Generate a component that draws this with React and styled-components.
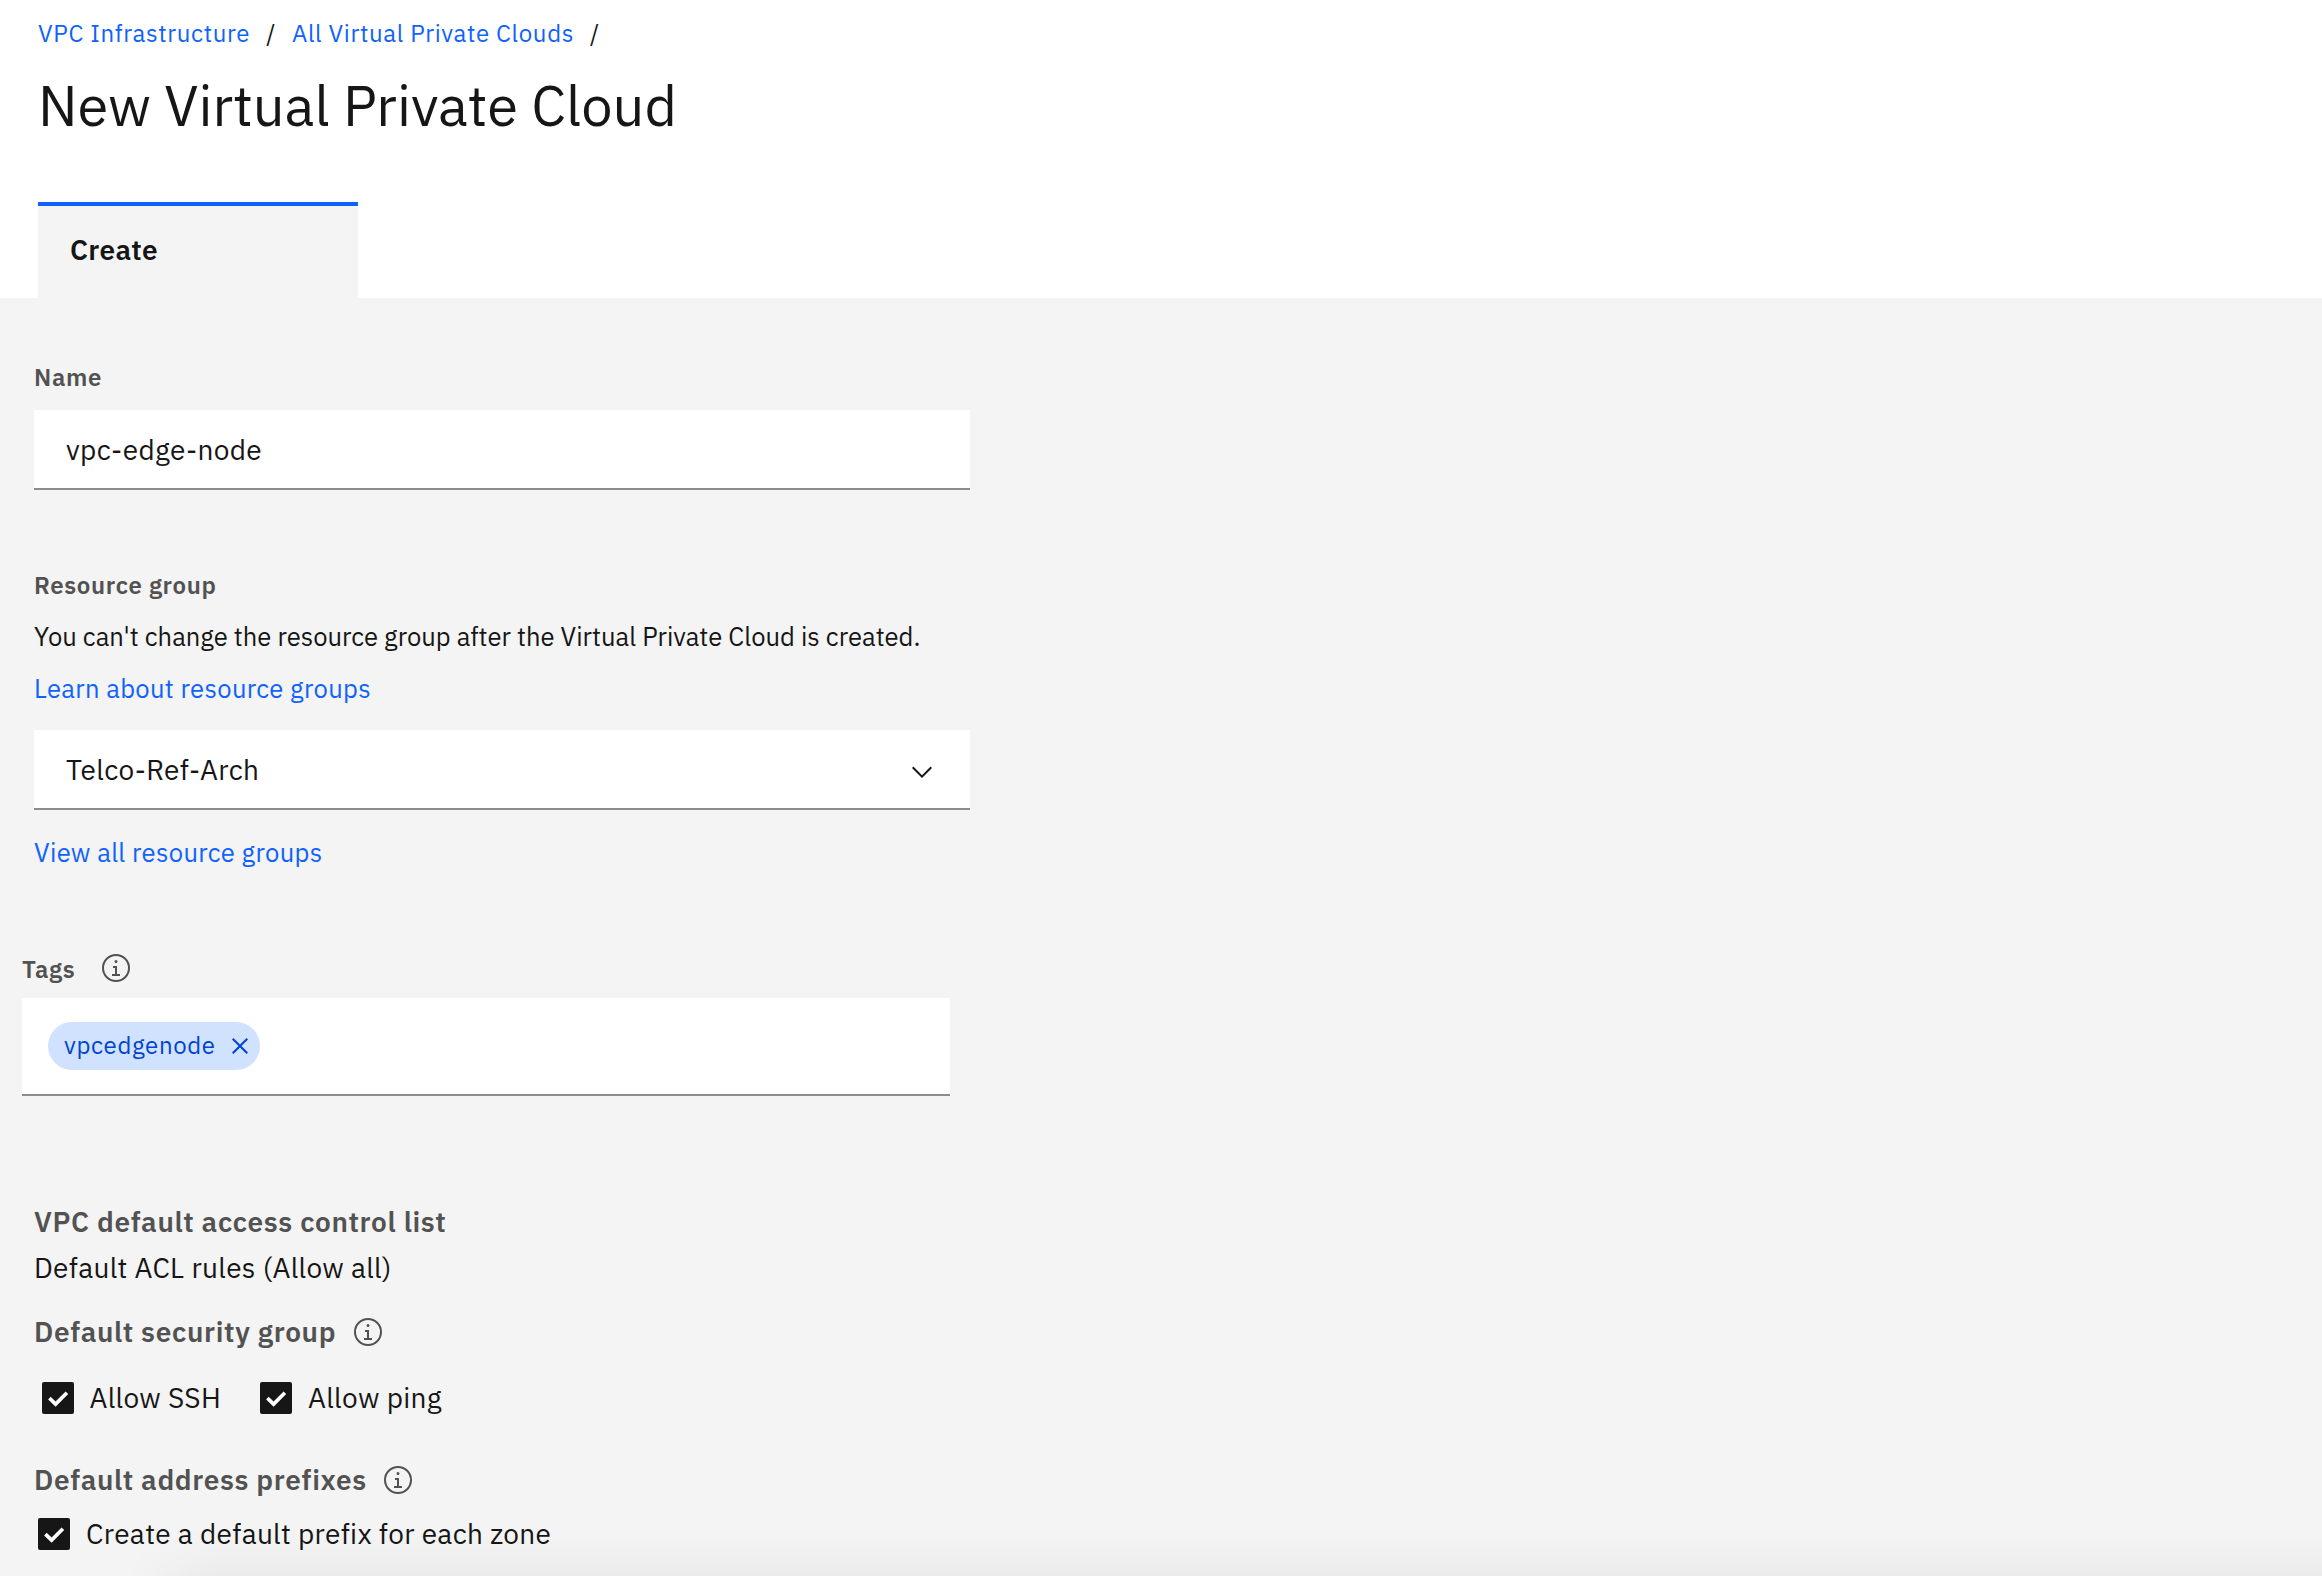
import React from "react";
import styled, { createGlobalStyle } from "styled-components";

const color = {
  text: "#161616",
  label: "#525252",
  link: "#0f62fe",
  layer: "#f4f4f4",
  field: "#ffffff",
  border: "#8d8d8d",
  tagBg: "#d0e2ff",
  tagText: "#0043ce",
};

const GlobalStyle = createGlobalStyle`
  *, *::before, *::after { box-sizing: border-box; }
  body {
    margin: 0;
    background: ${color.layer};
    color: ${color.text};
    font-family: "IBM Plex Sans", Roboto, "Liberation Sans", sans-serif;
  }
  h1, p { margin: 0; font-weight: 400; }
`;

const Page = styled.div`
  position: relative;
  display: flex;
  flex-direction: column;
  height: 1576px;
  overflow: hidden;
`;

const Header = styled.header`
  display: flex;
  flex-direction: column;
  height: 298px;
  padding: 17px 38px 0;
  background: #ffffff;
`;

const Breadcrumb = styled.nav`
  display: flex;
  gap: 16px;
  font-size: 24px;
  line-height: 32px;
  letter-spacing: 0.64px;
`;

const Link = styled.a`
  color: ${color.link};
  white-space: nowrap;
  text-decoration: none;
`;

const Title = styled.h1`
  margin-top: 20px;
  font-size: 56px;
  line-height: 72px;
`;

const Tab = styled.div`
  width: 320px;
  height: 96px;
  margin-top: auto;
  padding: 26px 32px 0;
  border-top: 4px solid ${color.link};
  background: ${color.layer};
  font-size: 28px;
  font-weight: 600;
  line-height: 36px;
  letter-spacing: 0.32px;
`;

const Form = styled.main`
  display: flex;
  flex-direction: column;
  align-items: flex-start;
  padding: 63px 34px 0;
`;

const Section = styled.section`
  display: flex;
  flex-direction: column;
  align-items: flex-start;
  margin-top: ${(p) => p.$top || 0}px;
  margin-left: ${(p) => p.$left || 0}px;
`;

const Label = styled.span`
  color: ${color.label};
  font-size: ${(p) => (p.$large ? 28 : 24)}px;
  font-weight: 600;
  line-height: ${(p) => (p.$large ? 36 : 32)}px;
  letter-spacing: 0.64px;
  white-space: nowrap;
`;

const LabelRow = styled.div`
  display: flex;
  align-items: center;
  gap: ${(p) => p.$gap}px;
  height: ${(p) => p.$height || 36}px;
  margin-top: ${(p) => p.$top || 0}px;
`;

const Field = styled.div`
  display: flex;
  align-items: center;
  justify-content: space-between;
  width: 936px;
  height: 80px;
  margin-top: ${(p) => p.$top}px;
  padding: 2px 32px 0;
  border-bottom: 2px solid ${color.border};
  background: ${color.field};
  font-size: 28px;
  line-height: 36px;
  letter-spacing: 0.32px;
`;

const Line = styled.p`
  margin-top: ${(p) => p.$top || 0}px;
  font-size: 25.6px;
  line-height: 35px;
  letter-spacing: ${(p) => p.$track || 0}px;
  white-space: nowrap;
`;

const Value = styled.p`
  margin-top: 10px;
  font-size: 28px;
  line-height: 36px;
  letter-spacing: 0.32px;
`;

const TagField = styled.div`
  display: flex;
  align-items: flex-start;
  width: 928px;
  height: 98px;
  margin-top: 13px;
  padding: 24px 26px;
  border-bottom: 2px solid ${color.border};
  background: ${color.field};
`;

const Tag = styled.span`
  display: flex;
  align-items: center;
  justify-content: space-between;
  width: 212px;
  height: 48px;
  padding: 0 4px 0 16px;
  border-radius: 24px;
  background: ${color.tagBg};
  color: ${color.tagText};
`;

const TagText = styled.span`
  margin-top: -2px;
  font-size: 24px;
  line-height: 32px;
  letter-spacing: 0.64px;
`;

const Icon = styled.svg`
  display: block;
  flex: none;
  width: 32px;
  height: 32px;
  margin-top: ${(p) => p.$shift || 0}px;
  fill: currentColor;
`;

const InfoSvg = styled(Icon)`
  color: ${color.label};
`;

const CheckRow = styled.div`
  display: flex;
  gap: 39px;
  margin-top: ${(p) => p.$top}px;
  margin-left: ${(p) => p.$left}px;
`;

const CheckLabel = styled.label`
  display: flex;
  align-items: center;
  gap: ${(p) => p.$gap || 16}px;
  font-size: 28px;
  line-height: 36px;
  letter-spacing: 0.32px;
  white-space: nowrap;
`;

const ActionBar = styled.div`
  position: absolute;
  top: 1582px;
  left: 168px;
  right: -120px;
  height: 120px;
  box-shadow: 0 0 64px rgba(0, 0, 0, 0.09);
`;

const InfoIcon = ({ shift }) => (
  <InfoSvg viewBox="0 0 32 32" $shift={shift} aria-hidden="true">
    <path d="M17 22V14H13v2h2v6H12v2h8V22zM16 8a1.5 1.5 0 1 0 1.5 1.5A1.5 1.5 0 0 0 16 8z" />
    <path d="M16 30A14 14 0 1 1 30 16 14 14 0 0 1 16 30ZM16 4A12 12 0 1 0 28 16 12 12 0 0 0 16 4Z" />
  </InfoSvg>
);

const Checkbox = ({ children, gap }) => (
  <CheckLabel $gap={gap}>
    <Icon viewBox="0 0 32 32" aria-hidden="true">
      <rect width="32" height="32" rx="2" />
      <polyline points="7.4,16.2 13.6,22.1 24.9,10.8" fill="none" stroke="#fff" strokeWidth="3.7" />
    </Icon>
    <span>{children}</span>
  </CheckLabel>
);

export default function App() {
  return (
    <Page>
      <GlobalStyle />
      <Header>
        <Breadcrumb>
          <Link>VPC Infrastructure</Link>
          <span>/</span>
          <Link>All Virtual Private Clouds</Link>
          <span>/</span>
        </Breadcrumb>
        <Title>New Virtual Private Cloud</Title>
        <Tab>Create</Tab>
      </Header>

      <Form>
        <Section>
          <Label>Name</Label>
          <Field $top={17}>vpc-edge-node</Field>
        </Section>

        <Section $top={79}>
          <Label>Resource group</Label>
          <Line $top={18}>
            You can't change the resource group after the Virtual Private Cloud is created.
          </Line>
          <Line $top={17} $track={0.32}>
            <Link>Learn about resource groups</Link>
          </Line>
          <Field $top={24}>
            Telco-Ref-Arch
            <Icon viewBox="0 0 16 16" $shift={4} aria-hidden="true">
              <path d="M8 11L3 6 3.7 5.3 8 9.6 12.3 5.3 13 6z" />
            </Icon>
          </Field>
          <Line $top={25} $track={0.32}>
            <Link>View all resource groups</Link>
          </Line>
        </Section>

        <Section $top={83} $left={-12}>
          <LabelRow $gap={24.7} $height={32}>
            <Label>Tags</Label>
            <InfoIcon shift={-2} />
          </LabelRow>
          <TagField>
            <Tag>
              <TagText>vpcedgenode</TagText>
              <Icon viewBox="0 0 32 32" aria-hidden="true">
                <path d="M24 9.4L22.6 8 16 14.6 9.4 8 8 9.4 14.6 16 8 22.6 9.4 24 16 17.4 22.6 24 24 22.6 17.4 16 24 9.4z" />
              </Icon>
            </Tag>
          </TagField>
        </Section>

        <Section $top={108}>
          <Label $large>VPC default access control list</Label>
          <Value>Default ACL rules (Allow all)</Value>
          <LabelRow $gap={16} $top={28}>
            <Label $large>Default security group</Label>
            <InfoIcon />
          </LabelRow>
          <CheckRow $top={30} $left={8}>
            <Checkbox gap={15.4}>Allow SSH</Checkbox>
            <Checkbox>Allow ping</Checkbox>
          </CheckRow>
          <LabelRow $gap={15.5} $top={46}>
            <Label $large>Default address prefixes</Label>
            <InfoIcon />
          </LabelRow>
          <CheckRow $top={18} $left={4}>
            <Checkbox>Create a default prefix for each zone</Checkbox>
          </CheckRow>
        </Section>
      </Form>
      <ActionBar />
    </Page>
  );
}
